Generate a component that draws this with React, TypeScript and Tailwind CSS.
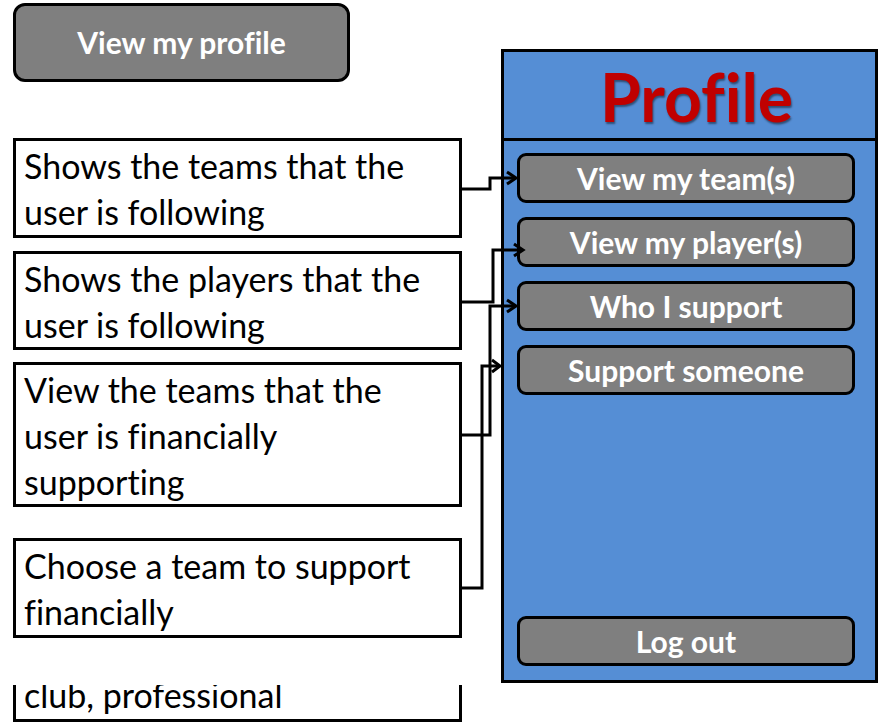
const font = { fontFamily: "Lato, 'Open Sans', sans-serif", fontVariantLigatures: "none" as const };

function NoteBox({ lines, className }: { lines: string[]; className: string }) {
  return (
    <div className={"border-[3px] border-black bg-white pl-[8px] pt-[2px] text-[34px] leading-[46px] text-black " + className}>
      {lines.map((l) => (
        <div key={l}>{l}</div>
      ))}
    </div>
  );
}

function PanelButton({ label }: { label: string }) {
  return (
    <div className="flex h-[50px] w-[338px] items-center justify-center rounded-[9px] border-[3px] border-black bg-[#7f7f7f] text-[30px] font-bold text-white">
      {label}
    </div>
  );
}

export default function App() {
  return (
    <div className="relative flex h-[725px] w-[894px] overflow-hidden bg-white" style={font}>
      <div className="ml-[13px] flex w-[449px] flex-col">
        <div className="mt-[3px] flex h-[79px] w-[337px] items-center justify-center rounded-[12px] border-[3px] border-black bg-[#7f7f7f] text-[30px] font-bold text-white">
          View my profile
        </div>
        <NoteBox className="mt-[56px] h-[100px]" lines={["Shows the teams that the", "user is following"]} />
        <NoteBox className="mt-[13px] h-[99px]" lines={["Shows the players that the", "user is following"]} />
        <NoteBox className="mt-[12px] h-[145px]" lines={["View the teams that the", "user is financially", "supporting"]} />
        <NoteBox className="mt-[31px] h-[100px]" lines={["Choose a team to support", "financially"]} />
        <div className="mt-[47px] h-[37px] overflow-hidden border-x-[3px] border-b-[3px] border-black pl-[8px] text-[34px] leading-[46px]">
          <div className="-mt-[13px]">club, professional</div>
        </div>
      </div>

      <div className="ml-[39px] mt-[49px] flex h-[634px] w-[377px] flex-col border-[3px] border-black bg-[#558ed5]">
        <div className="flex h-[89px] items-center justify-center border-b-[3px] border-black pl-[14px] pt-[2px]">
          <span className="text-[66px] font-bold text-[#c00000] [text-shadow:1px_2px_2px_rgba(0,0,0,0.45)]">Profile</span>
        </div>
        <div className="ml-[13px] mt-[12px] flex flex-col gap-[14px]">
          <PanelButton label="View my team(s)" />
          <PanelButton label="View my player(s)" />
          <PanelButton label="Who I support" />
          <PanelButton label="Support someone" />
        </div>
        <div className="mb-[14px] ml-[13px] mt-auto">
          <PanelButton label="Log out" />
        </div>
      </div>

      {/* connectors from the notes to the panel buttons */}
      <svg className="pointer-events-none absolute left-0 top-0" width="894" height="725" fill="none" stroke="black" strokeWidth="3">
        <path d="M462 189 H490 V178 H515" />
        <polyline points="507,172 516,178 507,184" />
        <path d="M462 302 H493 V250 H522" />
        <polyline points="514,244 523,250 514,256" />
        <path d="M462 435 H490 V306 H515" />
        <polyline points="507,300 516,306 507,312" />
        <path d="M462 588 H482 V366 H499" />
        <polyline points="492,360 500,366 492,372" />
      </svg>
    </div>
  );
}
